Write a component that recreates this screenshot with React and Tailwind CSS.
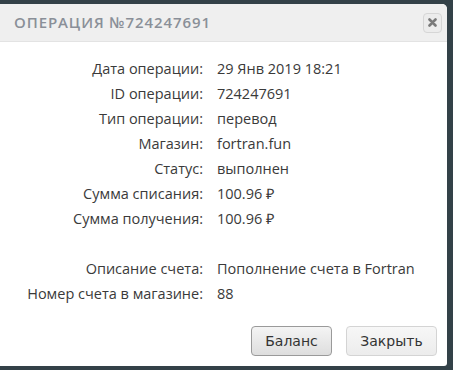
import React from "react";

const rows = [
  ["Дата операции:", "29 Янв 2019 18:21"],
  ["ID операции:", "724247691"],
  ["Тип операции:", "перевод"],
  ["Магазин:", "fortran.fun"],
  ["Статус:", "выполнен"],
  ["Сумма списания:", "100.96 ₽"],
  ["Сумма получения:", "100.96 ₽"],
];

const extra = [
  ["Описание счета:", "Пополнение счета в Fortran"],
  ["Номер счета в магазине:", "88"],
];

const Row = ({ label, value }) => (
  <div className="flex h-[25px] items-center">
    <div className="w-[217px] shrink-0 pr-[14px] text-right">{label}</div>
    <div>{value}</div>
  </div>
);

const App = () => {
  return (
    <div className="h-[370px] w-[453px] overflow-hidden bg-[#334148] pt-[4px] pr-[6px]">
      <div
        className="h-[362px] rounded-tr-[5px] rounded-br-[3px] bg-white text-[#3a3a3a]"
        style={{ fontFamily: "'Open Sans', sans-serif" }}
      >
        {/* Header */}
        <div className="flex h-[38px] items-center justify-between rounded-tr-[5px] border-b border-[#e3e3e3] bg-[#efefef] pl-[14px] pr-[5px]">
          <h1 className="text-[15px] font-semibold uppercase tracking-[0.9px] text-[#8a8f98]">
            Операция №724247691
          </h1>
          <button className="flex h-[20px] w-[19px] items-center justify-center rounded-[4px] border border-[#d6d6d6] bg-[#ececec]">
            <svg width="9" height="9" viewBox="0 0 9 9">
              <path d="M1.5 1.5 L7.5 7.5 M7.5 1.5 L1.5 7.5" stroke="#7a7a7a" strokeWidth="2.6" strokeLinecap="round" />
            </svg>
          </button>
        </div>

        {/* Body */}
        <div className="pt-[14px] text-[14.5px]">
          {rows.map(([l, v]) => (
            <Row key={l} label={l} value={v} />
          ))}
          <div className="h-[25px]" />
          {extra.map(([l, v]) => (
            <Row key={l} label={l} value={v} />
          ))}
        </div>

        {/* Footer */}
        <div
          className="mt-[20px] flex justify-end gap-[14px] pr-[10px] text-[14px] text-[#333]"
          style={{ fontFamily: "'DejaVu Sans', Verdana, sans-serif" }}
        >
          <button className="h-[30px] w-[81px] rounded-[4px] border border-[#9a9a9a] bg-gradient-to-b from-[#f4f4f4] to-[#dedede]">
            Баланс
          </button>
          <button className="h-[30px] w-[91px] rounded-[4px] border border-[#d4d4d4] bg-gradient-to-b from-[#f7f7f7] to-[#ececec]">
            Закрыть
          </button>
        </div>
      </div>
    </div>
  );
};

export default App;
